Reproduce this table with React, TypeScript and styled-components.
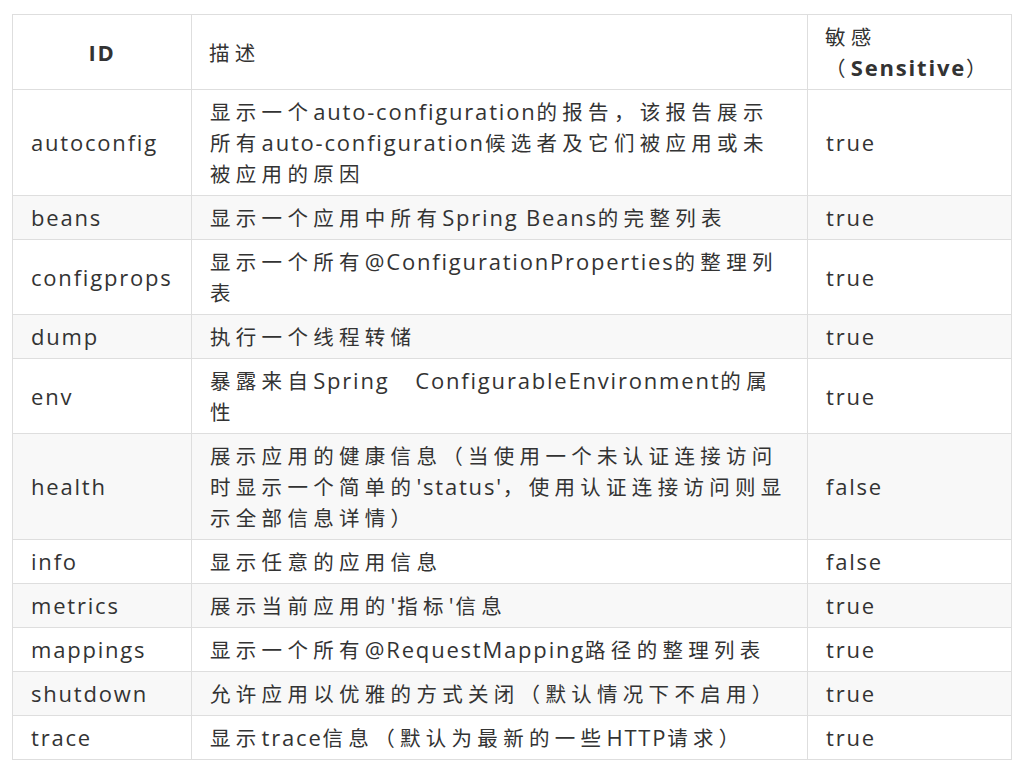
import React from "react";
import styled, { createGlobalStyle } from "styled-components";

const Global = createGlobalStyle`
  html, body { margin: 0; padding: 0; background: #ffffff; }
  body { font-family: "Open Sans", "Noto Sans CJK SC", sans-serif; }
`;

const Page = styled.div`
  padding: 14px 13px 6px 12px;
`;

const Table = styled.table`
  width: 999px;
  border-collapse: collapse;
  table-layout: fixed;
  color: #333333;
  font-family: "Open Sans", "Noto Sans CJK SC", sans-serif;
  font-size: 22px;
  line-height: 31px;
  letter-spacing: 1.8px;
`;

const HeadCell = styled.th<{ $center?: boolean }>`
  border: 1px solid #dedede;
  padding: 6px 17px;
  font-weight: 700;
  text-align: ${(p) => (p.$center ? "center" : "left")};
  vertical-align: middle;
  white-space: nowrap;
`;

const Row = styled.tr<{ $striped: boolean }>`
  background: ${(p) => (p.$striped ? "#f8f8f8" : "#ffffff")};
`;

const Cell = styled.td`
  border: 1px solid #dedede;
  padding: 6px 17px 6px 18px;
  vertical-align: middle;
  white-space: nowrap;
`;

const Han = styled.span`
  font-family: "Noto Sans CJK SC", sans-serif;
  font-weight: 400;
  font-size: 20.5px;
  line-height: 20px;
  letter-spacing: 5.3px;
`;

const CJK = /([\u3000-\u303f\u4e00-\u9fff\uff00-\uffef]+)/;

function Mixed({ text }: { text: string }) {
  const parts = text.split(CJK).filter((s) => s.length > 0);
  return (
    <>
      {parts.map((p, i) => (CJK.test(p) ? <Han key={i}>{p}</Han> : <React.Fragment key={i}>{p}</React.Fragment>))}
    </>
  );
}

function Lines({ lines }: { lines: string[] }) {
  return (
    <>
      {lines.map((l, i) => (
        <React.Fragment key={i}>
          {i > 0 && <br />}
          <Mixed text={l} />
        </React.Fragment>
      ))}
    </>
  );
}

type Endpoint = { id: string; desc: string[]; sensitive: string };

const endpoints: Endpoint[] = [
  {
    id: "autoconfig",
    desc: [
      "显示一个auto-configuration的报告，该报告展示",
      "所有auto-configuration候选者及它们被应用或未",
      "被应用的原因",
    ],
    sensitive: "true",
  },
  { id: "beans", desc: ["显示一个应用中所有Spring Beans的完整列表"], sensitive: "true" },
  {
    id: "configprops",
    desc: ["显示一个所有@ConfigurationProperties的整理列", "表"],
    sensitive: "true",
  },
  { id: "dump", desc: ["执行一个线程转储"], sensitive: "true" },
  {
    id: "env",
    desc: ["暴露来自Spring\u3000ConfigurableEnvironment的属", "性"],
    sensitive: "true",
  },
  {
    id: "health",
    desc: [
      "展示应用的健康信息（当使用一个未认证连接访问",
      "时显示一个简单的'status'，使用认证连接访问则显",
      "示全部信息详情）",
    ],
    sensitive: "false",
  },
  { id: "info", desc: ["显示任意的应用信息"], sensitive: "false" },
  { id: "metrics", desc: ["展示当前应用的'指标'信息"], sensitive: "true" },
  { id: "mappings", desc: ["显示一个所有@RequestMapping路径的整理列表"], sensitive: "true" },
  { id: "shutdown", desc: ["允许应用以优雅的方式关闭（默认情况下不启用）"], sensitive: "true" },
  { id: "trace", desc: ["显示trace信息（默认为最新的一些HTTP请求）"], sensitive: "true" },
];

export default function App() {
  return (
    <>
      <Global />
      <Page>
        <Table>
          <colgroup>
            <col style={{ width: 179 }} />
            <col style={{ width: 616 }} />
            <col style={{ width: 204 }} />
          </colgroup>
          <thead>
            <tr>
              <HeadCell $center>ID</HeadCell>
              <HeadCell>
                <Mixed text="描述" />
              </HeadCell>
              <HeadCell>
                <Lines lines={["敏感", "（Sensitive）"]} />
              </HeadCell>
            </tr>
          </thead>
          <tbody>
            {endpoints.map((e, i) => (
              <Row key={e.id} $striped={i % 2 === 1}>
                <Cell>{e.id}</Cell>
                <Cell>
                  <Lines lines={e.desc} />
                </Cell>
                <Cell>{e.sensitive}</Cell>
              </Row>
            ))}
          </tbody>
        </Table>
      </Page>
    </>
  );
}
